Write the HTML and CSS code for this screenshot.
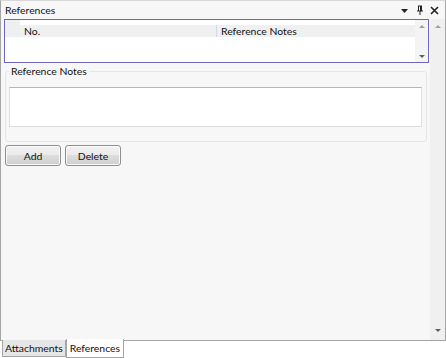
FILE: index.html
```html
<!DOCTYPE html>
<html lang="en">
<head>
    <meta charset="UTF-8">
    <title>References</title>
    <link rel="stylesheet" href="styles.css">
</head>
<body>
    <div class="panel">
        <div class="panel-header">
            <span class="panel-title">References</span>
            <div class="panel-tools">
                <svg width="9" height="9" viewBox="0 0 9 9"><path d="M1 3h7l-3.5 4z" fill="#222"/></svg>
                <svg width="9" height="11" viewBox="0 0 9 11"><path d="M3 1h4M3.5 1v5M6.5 1v5M2 6h6M5 6v4" stroke="#222" stroke-width="1" fill="none"/><path d="M5 1h1.5v5H5z" fill="#222"/></svg>
                <svg width="9" height="9" viewBox="0 0 9 9"><path d="M1 1l7 7M8 1l-7 7" stroke="#222" stroke-width="1.6"/></svg>
            </div>
        </div>
        <div class="panel-body">
            <div class="panel-content">
                <div class="grid">
                    <div class="grid-main">
                        <div class="grid-rowhead"></div>
                        <div class="grid-cells">
                            <div class="grid-top"></div>
                            <div class="grid-head">
                                <div class="col col-no">No.</div>
                                <div class="col col-notes">Reference Notes</div>
                            </div>
                        </div>
                    </div>
                    <div class="scroll small">
                        <span class="arrow up"></span>
                        <span class="arrow down"></span>
                    </div>
                </div>
                <fieldset class="notes">
                    <legend>Reference Notes</legend>
                    <div class="notes-box"></div>
                </fieldset>
                <div class="actions">
                    <button class="btn">Add</button>
                    <button class="btn">Delete</button>
                </div>
            </div>
            <div class="scroll">
                <span class="arrow up"></span>
                <span class="arrow down"></span>
            </div>
        </div>
    </div>
    <div class="tabs">
        <div class="tab">Attachments</div>
        <div class="tab active">References</div>
    </div>
</body>
</html>
```

FILE: styles.css
```css
body {
    margin: 0;
    background: #ffffff;
    font-family: Lato, "Open Sans", sans-serif;
    font-size: 10.4px;
    color: #111111;
}
.panel {
    width: 444px;
    height: 339px;
    border: 1px solid #a5a5a5;
    border-top-color: #d8d8d8;
    background: #f7f7f7;
    display: flex;
    flex-direction: column;
}
.panel-header {
    height: 18px;
    display: flex;
    align-items: center;
    justify-content: space-between;
    padding: 0 6px 0 4px;
    flex-shrink: 0;
}
.panel-title {
    line-height: 18px;
}
.panel-tools {
    display: flex;
    align-items: center;
    gap: 6px;
}
.panel-body {
    flex: 1;
    display: flex;
}
.panel-content {
    flex: 1;
    padding: 0 1px 0 3px;
}
.scroll {
    width: 15px;
    background: #f0f0f0;
    display: flex;
    flex-direction: column;
    justify-content: space-between;
    align-items: center;
    padding: 6px 0 8px;
    box-sizing: border-box;
}
.scroll.small {
    width: 13px;
    padding: 5px 0 4px;
    background: #f4f4f4;
}
.arrow {
    width: 0;
    height: 0;
    border-left: 3px solid transparent;
    border-right: 3px solid transparent;
}
.arrow.up {
    border-bottom: 3px solid #a0a0a0;
}
.arrow.down {
    border-top: 3px solid #606060;
}
.grid {
    height: 42px;
    border: 1px solid #6f68b8;
    background: #ffffff;
    display: flex;
}
.grid-main {
    flex: 1;
    display: flex;
}
.grid-rowhead {
    width: 15px;
    height: 17px;
    background: #eeeff2;
}
.grid-cells {
    flex: 1;
}
.grid-top {
    height: 5px;
}
.grid-head {
    height: 12px;
    background: #eef0f2;
    display: flex;
    line-height: 12px;
}
.col {
    padding-left: 4px;
    white-space: nowrap;
}
.col-no {
    width: 192px;
    border-right: 1px solid #d6d8dc;
}
.notes {
    margin: 2px 0 0 1px;
    border: 1px solid #e3e5e8;
    border-radius: 3px;
    padding: 9px 4px 14px 3px;
    height: 77px;
    box-sizing: border-box;
    width: 422px;
}
.notes legend {
    padding: 0 2px;
    margin-left: 0;
    line-height: 13px;
}
.notes-box {
    height: 38px;
    background: #ffffff;
    border: 1px solid #dcdee2;
    border-top-color: #b4b6ba;
}
.actions {
    display: flex;
    gap: 4px;
    margin: 3px 0 0 1px;
}
.btn {
    width: 56px;
    height: 21px;
    font-family: inherit;
    font-size: 10.4px;
    color: #111111;
    border: 1px solid #8e8f91;
    border-radius: 3px;
    background: linear-gradient(#f2f2f2 0%, #ebebeb 45%, #dddddd 50%, #cfcfcf 100%);
    box-shadow: inset 0 0 0 1px #fbfbfb;
    padding: 0;
}
.tabs {
    display: flex;
    padding-left: 2px;
    margin-top: -1px;
}
.tab {
    height: 16px;
    line-height: 16px;
    padding: 0 2px;
    border: 1px solid #a5a5a5;
    border-top: none;
    background: #e6e6e6;
}
.tab.active {
    background: #ffffff;
    margin-left: 0;
    height: 18px;
    line-height: 18px;
    padding: 0 3px;
    margin-top: -1px;
}
```
